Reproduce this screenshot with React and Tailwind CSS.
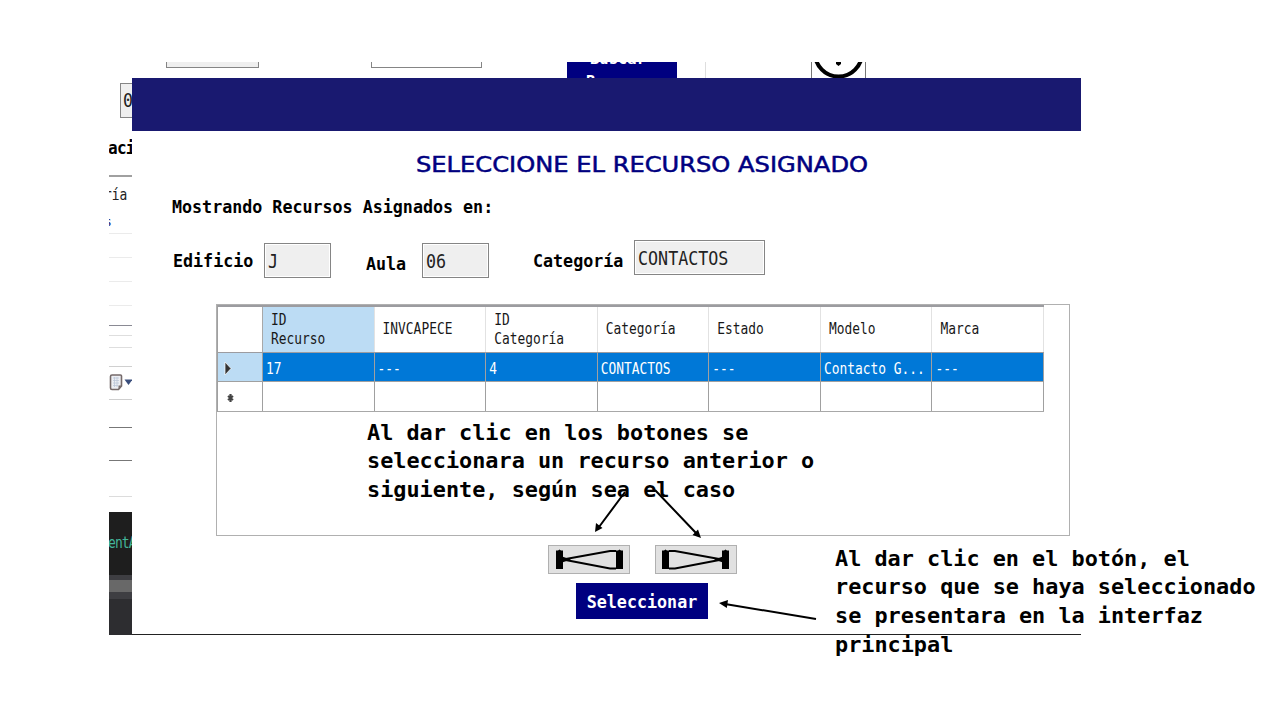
import React from 'react';

const MONO = "font-['DejaVu_Sans_Mono','Liberation_Mono',monospace]";

const headers = [['ID', 'Recurso'], ['INVCAPECE'], ['ID', 'Categoría'], ['Categoría'], ['Estado'], ['Modelo'], ['Marca']];
const cells = ['17', '---', '4', 'CONTACTOS', '---', 'Contacto G...', '---'];

function Label({ className, children }) {
  return (
    <span className={`block origin-center scale-y-[1.1] whitespace-pre text-[16.7px] leading-5 font-bold tracking-[-0.01px] text-black ${className}`}>{children}</span>
  );
}

function Field({ className, children }) {
  return (
    <div className={`h-[35px] shrink-0 border border-[#858585] bg-white p-px ${className}`}>
      <div className="h-full bg-[#efefef] pl-[2px]">
        <span className="block origin-center scale-y-[1.12] text-[16.7px] leading-[32px] text-[#222]">{children}</span>
      </div>
    </div>
  );
}

function TopStrip() {
  return (
    <div className="flex h-4 w-[972px] overflow-hidden pl-[57px]">
      <div className="h-[6px] w-[93px] border-x border-b border-[#858585] bg-[#efefef]" />
      <div className="ml-[112px] h-[6px] w-[111px] border-x border-b border-[#858585]" />
      <div className="ml-[85px] w-[110px] overflow-hidden bg-[#000080] pl-[19px] font-bold text-white">
        <div className="-mt-[13px] h-[22px] pl-1 text-[15.500px] leading-[21px]">Buscar</div>
        <div className="text-[15.500px] leading-[22px]">Recurso</div>
      </div>
      <div className="ml-[28px] w-px bg-[#dedede]" />
      <div className="ml-[105px] w-[55px] overflow-hidden border-x border-[#777]">
        <svg className="block" width="53" height="16" viewBox="0 0 53 16">
          <circle cx="26.5" cy="-9" r="23.5" fill="none" stroke="#000" strokeWidth="4" />
          <path d="M24 0h5v2l-2.500 2-2.500-2z" fill="#000" />
        </svg>
      </div>
    </div>
  );
}

function LeftStrip() {
  return (
    <div className="flex w-[23px] shrink-0 flex-col overflow-hidden">
      <div className="ml-[11px] mt-[5px] h-[35px] w-[60px] shrink-0 border border-[#858585] bg-[#efefef] pl-[2px] text-[16.7px] leading-[33px] text-[#222]">
        <span className="block origin-center scale-y-[1.12]">06</span>
      </div>
      <div className="-ml-px mt-[20px] h-5 shrink-0 origin-center scale-y-[1.12] text-[16px] font-bold leading-5 tracking-[-0.7px] whitespace-nowrap">aci</div>
      <div className="mt-[17px] h-[2px] shrink-0 bg-[#a0a0a0]" />
      <div className="mt-[8px] h-5 shrink-0 -ml-[5px] origin-center scale-y-[1.17] text-[12.900px] leading-5 text-[#222]">ría</div>
      <div className="mt-[7px] h-5 shrink-0 -ml-[5px] text-[13px] leading-5 text-[#222270]">s</div>
      <div className="mt-px h-px shrink-0 bg-[#ebebeb]" />
      <div className="mt-[23px] h-px shrink-0 bg-[#ebebeb]" />
      <div className="mt-[23px] h-px shrink-0 bg-[#ebebeb]" />
      <div className="mt-[23px] h-px shrink-0 bg-[#ebebeb]" />
      <div className="mt-[19px] h-px shrink-0 bg-[#8a8a94]" />
      <div className="mt-[9px] h-px shrink-0 bg-[#dedede]" />
      <div className="mt-[11px] h-px shrink-0 bg-[#dedede]" />
      <div className="mt-[18px] h-px shrink-0 bg-[#d0d0d0]" />
      <svg className="mt-[6px] block shrink-0" width="23" height="19" viewBox="0 0 23 19">
        <path d="M3 2h8.500q1 0 1 1v10l-3 3.500H3q-1.500 0-1.500-1.500V3.500Q1.500 2 3 2z" fill="#eceef3" stroke="#756a6a" strokeWidth="1.600" />
        <path d="M4 5h6M4 7.500h6M4 10h6M4 12.500h5M5.500 4v10M8 4v10" stroke="#bcc6d8" strokeWidth=".8" />
        <path d="M9.500 16v-3.500h3z" fill="#756a6a" />
        <path d="M15.500 6.500h8L19.500 12z" fill="#3a4e7c" />
      </svg>
      <div className="mt-[7px] h-px shrink-0 bg-[#cfcfcf]" />
      <div className="mt-[27px] h-px shrink-0 bg-[#777]" />
      <div className="mt-[32px] h-px shrink-0 bg-[#777]" />
      <div className="mt-[35px] h-px shrink-0 bg-[#dcdcdc]" />
      <div className="mt-[15px] h-[63px] shrink-0 bg-[#1e1e1e] pt-[22px] text-[13px] leading-[18px] tracking-[-0.9px] whitespace-nowrap text-[#43b599]">
        <span className="block origin-center -ml-px scale-y-[1.15]">entA</span>
      </div>
      <div className="h-[5px] shrink-0 bg-[#3e3e42]" />
      <div className="h-3 shrink-0 bg-[#686868]" />
      <div className="h-[7px] shrink-0 bg-[#3e3e42]" />
      <div className="flex-1 bg-[#2d2d30]" />
    </div>
  );
}

function Grid() {
  return (
    <div className="ml-[84px] h-[232px] w-[854px] border border-[#b0b0b0]">
      <div className="w-[827px] border-l border-[#a0a0a0]">
        <div className="flex h-[48px] border-t-2 border-b border-[#9c9ca0] text-[12.900px] text-[#181818]">
          <div className="w-[45px] shrink-0 border-r border-[#a8a8a8]" />
          {headers.map((lines, i) => (
            <div key={i} className={`flex flex-1 flex-col justify-center border-r border-[#e2e2e2] pl-2 ${i === 0 ? 'bg-[#bcdcf4]' : ''}`}>
              {lines.map((l) => (
                <span key={l} className="block origin-center scale-y-[1.17] leading-[18.500px]">{l}</span>
              ))}
            </div>
          ))}
        </div>
        <div className="flex h-[29px] border-b border-[#a0a0a0] bg-[#0078d7] text-[12.900px] text-white">
          <div className="w-[45px] shrink-0 border-r border-[#a0a0a0] bg-[#bcdcf4]">
            <svg className="block" width="43" height="28" viewBox="0 0 43 28">
              <path d="M7 9l6 6.500-6 6.500z" fill="#333" stroke="#fff" strokeWidth=".7" />
            </svg>
          </div>
          {cells.map((c, i) => (
            <div key={i} className="min-w-0 flex-1 border-r border-[#a0a0a0] pl-[3px] whitespace-nowrap">
              <span className="block origin-center scale-y-[1.17] leading-[31px]">{c}</span>
            </div>
          ))}
        </div>
        <div className="flex h-[30px] border-b border-[#a8a8a8]">
          <div className="w-[45px] shrink-0 border-r border-[#a0a0a0]">
            <svg className="block" width="43" height="29" viewBox="0 0 43 29">
              <path d="M12.500 12v8M10 14l5 4M15 14l-5 4" stroke="#444" strokeWidth="2.200" />
            </svg>
          </div>
          {cells.map((c, i) => (
            <div key={i} className="flex-1 border-r border-[#a0a0a0]" />
          ))}
        </div>
      </div>
    </div>
  );
}

function NavIcon({ flip }) {
  return (
    <div className={`flex h-[29px] w-[82px] items-center justify-center border border-[#b0b0b0] bg-[#e1e1e1] ${flip ? '-scale-x-100' : ''}`}>
      <svg width="70" height="21" viewBox="0 0 70 21">
        <path d="M2 1.500h2l1.500-1L7 1.500h2V20H2zM62 1.500h2l1.500-1 1.500 1h2V20h-7z" fill="#000" />
        <path d="M62 2h-6L9 10.500 56 19.500h6" fill="none" stroke="#000" strokeWidth="2" />
        <path d="M8 7.500l9 3-9 3z" fill="#000" />
      </svg>
    </div>
  );
}

function Modal() {
  return (
    <div className="h-[557px] w-[949px] shrink-0 border-b border-[#222] bg-white">
      <div className="h-[53px] bg-[#191970]" />
      <div className="flex h-[65px] items-center pl-[283px]">
        <svg width="454" height="26" viewBox="0 0 454 26" className="block">
          <text x="1" y="20.500" textLength="452" lengthAdjust="spacingAndGlyphs" fill="#000080" stroke="#000080" strokeWidth=".5" className="font-['DejaVu_Sans',sans-serif] text-[20.500px]">SELECCIONE EL RECURSO ASIGNADO</text>
        </svg>
      </div>
      <Label className="h-5 pl-10">Mostrando Recursos Asignados en:</Label>
      <div className="flex h-[88px] items-start pl-[41px]">
        <Label className="mt-[34px] w-[91px]">Edificio</Label>
        <Field className="mt-[27px] w-[67px]">J</Field>
        <Label className="ml-[35px] mt-[37px] w-[56px]">Aula</Label>
        <Field className="mt-[27px] w-[67px]">06</Field>
        <Label className="ml-[44px] mt-[34px] w-[101px]">Categoría</Label>
        <Field className="mt-[24px] w-[131px]">CONTACTOS</Field>
      </div>
      <Grid />
      <div className="mt-[9px] flex gap-[25px] pl-[416px]">
        <NavIcon />
        <NavIcon flip />
      </div>
      <div className="mt-[9px] pl-[444px]">
        <button className="block h-9 w-[132px] bg-[#000080] text-[16.7px] leading-[37px] font-bold text-white">
          <span className="block origin-center scale-y-[1.1]">Seleccionar</span>
        </button>
      </div>
    </div>
  );
}

export default function App() {
  return (
    <div className={`relative h-[720px] w-[1280px] overflow-hidden bg-white pl-[109px] pt-[62px] ${MONO}`}>
      <TopStrip />
      <div className="flex h-[557px]">
        <LeftStrip />
        <Modal />
      </div>
      <p className="absolute left-[367px] top-[418.500px] text-[21.850px] leading-[28.500px] font-bold whitespace-nowrap text-black">
        Al dar clic en los botones se<br />seleccionara un recurso anterior o<br />siguiente, según sea el caso
      </p>
      <p className="absolute left-[835px] top-[544.500px] text-[21.830px] leading-[28.700px] font-bold whitespace-nowrap text-black">
        Al dar clic en el botón, el<br />recurso que se haya seleccionado<br />se presentara en la interfaz<br />principal
      </p>
      <svg className="absolute left-0 top-0" width="1280" height="720" viewBox="0 0 1280 720">
        <g stroke="#000" strokeWidth="2" fill="none">
          <path d="M625 492L599 527M655 490L696 533M816 619L725 604" />
        </g>
        <path d="M595 532l1-9 6.500 5zM701 538l-8.500-3 5.500-5.500zM719 603l9-3-1.200 8z" fill="#000" />
      </svg>
    </div>
  );
}
